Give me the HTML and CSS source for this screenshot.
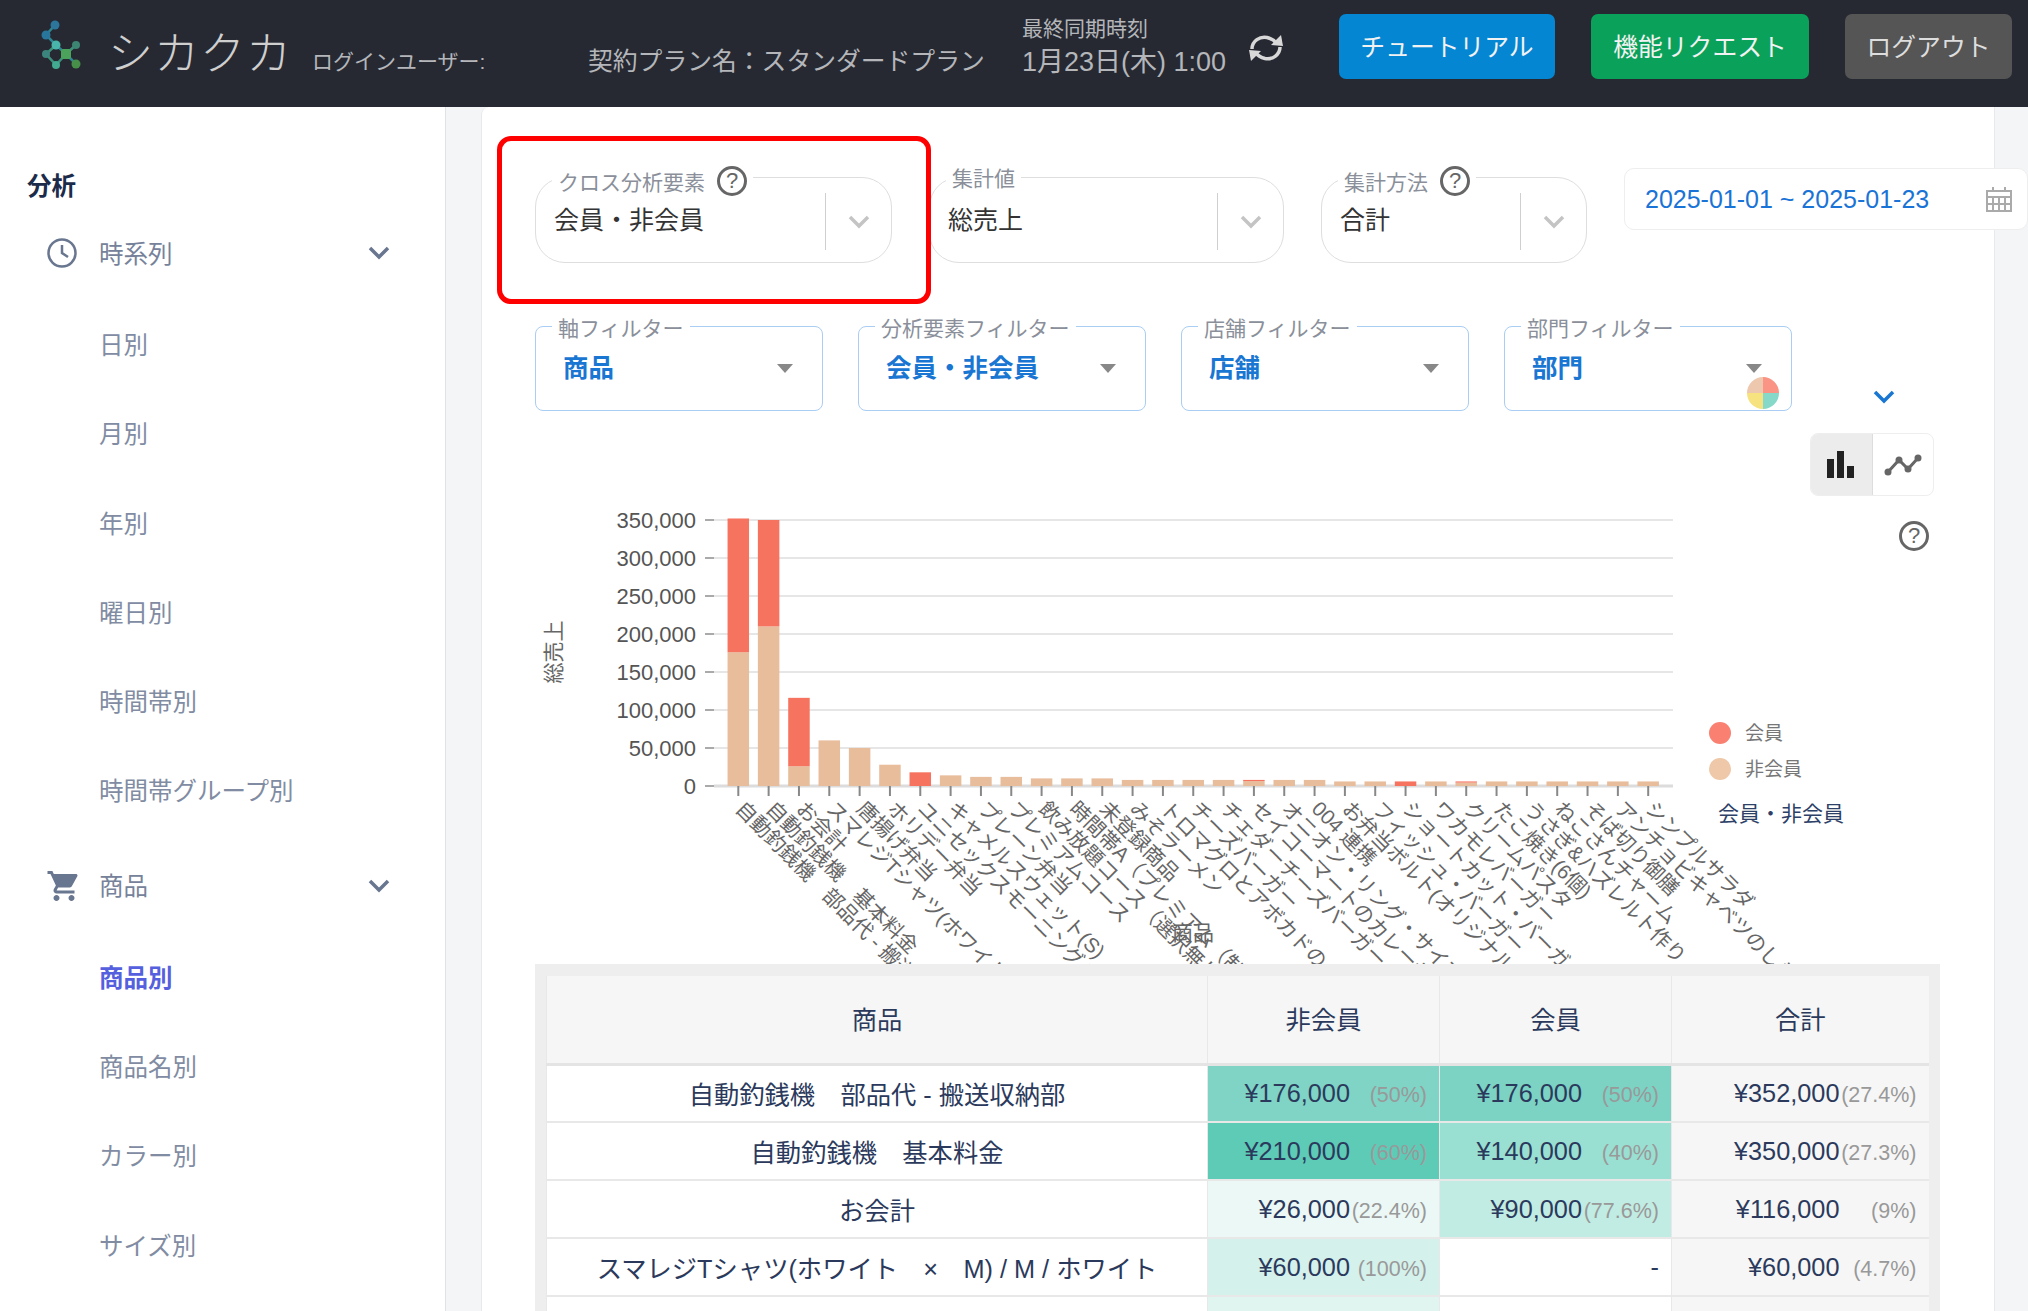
FILE: index.html
```html
<!DOCTYPE html>
<html lang="ja">
<head>
    <meta charset="UTF-8">
    <title>シカクカ</title>
    <link rel="stylesheet" href="styles.css">
</head>
<body>
<header class="topbar">
    <svg class="logo" viewBox="40 15 50 55" width="50" height="55">
        <g class="logo-links">
            <path d="M57 25L48 35L58 45L68 54L78 64" stroke="#2f8f9c"/>
            <path d="M78 45L68 54L58 65L48 54L58 45" stroke="#3f9c84"/>
        </g>
        <circle cx="57" cy="25" r="4.5" fill="#2d7fa8"/>
        <circle cx="48" cy="35" r="4.5" fill="#2a7fa8"/>
        <circle cx="58" cy="45" r="4.5" fill="#4cc4b8"/>
        <circle cx="78" cy="45" r="4" fill="#3f8f7a"/>
        <circle cx="48" cy="54" r="4" fill="#3f8f88"/>
        <rect x="63" y="49" width="10" height="10" rx="2" fill="#4fb060"/>
        <circle cx="58" cy="65" r="4" fill="#44b89c"/>
        <circle cx="78" cy="64" r="4.5" fill="#4a9c4c"/>
    </svg>
    <div class="brand">シカクカ</div>
    <div class="login-user">ログインユーザー:</div>
    <div class="plan">契約プラン名：スタンダードプラン</div>
    <div class="sync">
        <div class="sync-label">最終同期時刻</div>
        <div class="sync-time">1月23日(木) 1:00</div>
    </div>
    <svg class="sync-icon" viewBox="0 0 38 30" width="38" height="30">
        <path d="M5 16C5 8 13 3 20 4.5C24 5.500 27 7 29 10" class="sync-stroke"/>
        <path d="M33 14C33 22 25 27 18 25.500C14 24.500 11 23 9 20" class="sync-stroke"/>
        <path d="M24 12L36 13L34 2Z" fill="#d8d8d8"/>
        <path d="M14 18L2 17L4 28Z" fill="#d8d8d8"/>
    </svg>
    <div class="top-buttons">
        <button class="top-btn btn-tutorial">チュートリアル</button>
        <button class="top-btn btn-request">機能リクエスト</button>
        <button class="top-btn btn-logout">ログアウト</button>
    </div>
</header>

<div class="layout">
    <nav class="sidebar">
        <div class="nav-title">分析</div>
        <div class="nav-group">
            <svg class="nav-icon" viewBox="0 0 32 32" width="32" height="32">
                <circle cx="16" cy="16" r="13.500" class="clock-line"/>
                <path d="M16 8V16L22 20" class="clock-line"/>
            </svg>
            <span class="nav-group-name">時系列</span>
            <svg class="nav-chevron" viewBox="0 0 22 14" width="22" height="14"><path d="M2 2L11 11L20 2"/></svg>
        </div>
        <a class="nav-item">日別</a>
        <a class="nav-item">月別</a>
        <a class="nav-item">年別</a>
        <a class="nav-item">曜日別</a>
        <a class="nav-item">時間帯別</a>
        <a class="nav-item">時間帯グループ別</a>
        <div class="nav-group nav-group-second">
            <svg class="nav-icon" viewBox="0 0 24 24" width="36" height="36">
                <path fill="#69768f" d="M7 18c-1.100 0-1.990.9-1.990 2S5.900 22 7 22s2-.9 2-2-.9-2-2-2zM1 2v2h2l3.600 7.590-1.350 2.450c-.16.28-.25.61-.25.96 0 1.100.9 2 2 2h12v-2H7.420c-.14 0-.25-.11-.25-.25l.03-.12.9-1.630h7.450c.75 0 1.410-.41 1.750-1.030l3.580-6.490c.08-.14.12-.31.12-.48 0-.55-.45-1-1-1H5.210l-.94-2H1zm16 16c-1.100 0-1.990.9-1.990 2s.89 2 1.990 2 2-.9 2-2-.9-2-2-2z"/>
            </svg>
            <span class="nav-group-name">商品</span>
            <svg class="nav-chevron" viewBox="0 0 22 14" width="22" height="14"><path d="M2 2L11 11L20 2"/></svg>
        </div>
        <a class="nav-item active">商品別</a>
        <a class="nav-item">商品名別</a>
        <a class="nav-item">カラー別</a>
        <a class="nav-item">サイズ別</a>
    </nav>

    <main class="content">
        <div class="controls">
            <div class="highlight"></div>
            <div class="select select-cross">
                <div class="select-label">クロス分析要素<span class="help help-small">?</span></div>
                <div class="select-value">会員・非会員</div>
                <div class="select-arrow"><svg viewBox="0 0 22 14" width="22" height="14"><path d="M2 2L11 11L20 2"/></svg></div>
            </div>
            <div class="select select-value-kind">
                <div class="select-label">集計値</div>
                <div class="select-value">総売上</div>
                <div class="select-arrow"><svg viewBox="0 0 22 14" width="22" height="14"><path d="M2 2L11 11L20 2"/></svg></div>
            </div>
            <div class="select select-method">
                <div class="select-label">集計方法<span class="help help-small">?</span></div>
                <div class="select-value">合計</div>
                <div class="select-arrow"><svg viewBox="0 0 22 14" width="22" height="14"><path d="M2 2L11 11L20 2"/></svg></div>
            </div>
            <div class="date-range">
                <span>2025-01-01 ~ 2025-01-23</span>
                <svg viewBox="0 0 26 26" width="26" height="26" class="calendar">
                    <path d="M1 5H25V25H1ZM1 11H25M1 18H25M7 11V25M13 11V25M19 11V25M7 1V5M19 1V5"/>
                </svg>
            </div>
        </div>

        <div class="filters">
            <div class="filter">
                <div class="filter-label">軸フィルター</div>
                <div class="filter-value">商品</div>
                <div class="triangle"></div>
            </div>
            <div class="filter">
                <div class="filter-label">分析要素フィルター</div>
                <div class="filter-value">会員・非会員</div>
                <div class="triangle"></div>
            </div>
            <div class="filter">
                <div class="filter-label">店舗フィルター</div>
                <div class="filter-value">店舗</div>
                <div class="triangle"></div>
            </div>
            <div class="filter">
                <div class="filter-label">部門フィルター</div>
                <div class="filter-value">部門</div>
                <div class="triangle"></div>
                <svg class="pie" viewBox="0 0 32 32" width="32" height="32">
                    <path d="M16 16V0A16 16 0 0 0 0 16Z" fill="#eec8ae"/>
                    <path d="M16 16V0A16 16 0 0 1 32 16Z" fill="#fa9484"/>
                    <path d="M16 16H0A16 16 0 0 0 16 32Z" fill="#f6e27e"/>
                    <path d="M16 16H32A16 16 0 0 1 16 32Z" fill="#86d9c8"/>
                </svg>
            </div>
            <svg class="more" viewBox="0 0 22 14" width="22" height="14"><path d="M2 2L11 11L20 2"/></svg>
        </div>

        <div class="chart-area">
            <svg id="chart" class="chart" viewBox="535 420 1405 544" width="1405" height="544"></svg>
            <div class="chart-toggle">
                <div class="toggle-btn toggle-active">
                    <svg viewBox="0 0 28 27" width="28" height="27">
                        <path d="M0 8H7V27H0ZM10 0H17V27H10ZM20 15H27V27H20Z" fill="#222"/>
                    </svg>
                </div>
                <div class="toggle-btn">
                    <svg viewBox="0 0 38 24" width="38" height="24">
                        <path d="M4 19L15 7L24 16L34 5" fill="none" stroke="#666" stroke-width="3"/>
                        <circle cx="4" cy="19" r="3.500" fill="#666"/>
                        <circle cx="15" cy="7" r="3.500" fill="#666"/>
                        <circle cx="24" cy="16" r="3.500" fill="#666"/>
                        <circle cx="34" cy="5" r="3.500" fill="#666"/>
                    </svg>
                </div>
            </div>
            <span class="help help-chart">?</span>
        </div>

        <div class="table-wrap">
            <table class="cross-table">
                <colgroup>
                    <col class="col-name"><col class="col-a"><col class="col-b"><col class="col-total">
                </colgroup>
                <thead>
                    <tr><th>商品</th><th>非会員</th><th>会員</th><th>合計</th></tr>
                </thead>
                <tbody>
                    <tr>
                        <td class="name">自動釣銭機　部品代 - 搬送収納部</td>
                        <td class="num heat-50">¥176,000<span class="pct">(50%)</span></td>
                        <td class="num heat-50b">¥176,000<span class="pct">(50%)</span></td>
                        <td class="num total">¥352,000<span class="pct">(27.4%)</span></td>
                    </tr>
                    <tr>
                        <td class="name">自動釣銭機　基本料金</td>
                        <td class="num heat-60">¥210,000<span class="pct">(60%)</span></td>
                        <td class="num heat-40">¥140,000<span class="pct">(40%)</span></td>
                        <td class="num total">¥350,000<span class="pct">(27.3%)</span></td>
                    </tr>
                    <tr>
                        <td class="name">お会計</td>
                        <td class="num heat-22">¥26,000<span class="pct">(22.4%)</span></td>
                        <td class="num heat-77">¥90,000<span class="pct">(77.6%)</span></td>
                        <td class="num total">¥116,000<span class="pct">(9%)</span></td>
                    </tr>
                    <tr>
                        <td class="name">スマレジTシャツ(ホワイト　×　M) / M / ホワイト</td>
                        <td class="num heat-100">¥60,000<span class="pct">(100%)</span></td>
                        <td class="num">-</td>
                        <td class="num total">¥60,000<span class="pct">(4.7%)</span></td>
                    </tr>
                    <tr>
                        <td class="name">唐揚げ弁当</td>
                        <td class="num heat-last">¥50,000<span class="pct">(100%)</span></td>
                        <td class="num">-</td>
                        <td class="num total">¥50,000<span class="pct">(3.9%)</span></td>
                    </tr>
                </tbody>
            </table>
        </div>
    </main>
</div>
<script src="chart.js"></script>
</body>
</html>
```

FILE: styles.css
```css
* {
    box-sizing: border-box;
}

html, body {
    height: 100%;
}

body {
    margin: 0;
    overflow: hidden;
    background-color: #f4f5f7;
    font-family: "Liberation Sans", "Noto Sans CJK JP", sans-serif;
    font-size: 24px;
    color: #333;
}

/* Header */
.topbar {
    display: flex;
    align-items: flex-start;
    height: 107px;
    background-color: #262932;
    color: #c6c8cc;
}
.logo {
    margin: 15px 0 0 38px;
    opacity: 0.9;
}
.logo-links path {
    fill: none;
    stroke-width: 2.500;
}
.brand {
    margin: 25px 0 0 20px;
    width: 204px;
    font-size: 45px;
    line-height: 60px;
    letter-spacing: 1px;
    font-weight: 300;
    color: #cfcfcf;
}
.login-user {
    width: 276px;
    margin-top: 48px;
    font-size: 21px;
    line-height: 28px;
    color: #b4b6ba;
    white-space: nowrap;
}
.plan {
    width: 434px;
    margin-top: 44px;
    font-size: 24.800px;
    line-height: 36px;
    color: #b4b6ba;
    white-space: nowrap;
}
.sync {
    width: 225px;
    margin-top: 14px;
    color: #b4b6ba;
}
.sync-label {
    font-size: 21px;
    line-height: 30px;
}
.sync-time {
    font-size: 27px;
    line-height: 36px;
}
.sync-icon {
    margin-top: 33px;
}
.sync-stroke {
    fill: none;
    stroke: #d8d8d8;
    stroke-width: 3.500;
}
.top-buttons {
    display: flex;
    gap: 36px;
    margin: 14px 16px 0 auto;
}
.top-btn {
    height: 65px;
    padding: 0 0 4px;
    border: none;
    border-radius: 7px;
    font-family: inherit;
    font-size: 24.800px;
    color: #f2f2f2;
}
.btn-tutorial {
    width: 216px;
    background-color: #0486d2;
}
.btn-request {
    width: 218px;
    background-color: #0aa15a;
}
.btn-logout {
    width: 167px;
    background-color: #555;
    color: #ddd;
}

/* Sidebar */
.layout {
    display: flex;
    height: 1204px;
}
.sidebar {
    flex: none;
    width: 446px;
    padding-top: 60px;
    background-color: #fff;
    border-right: 1px solid #e0e2e6;
    font-size: 24.500px;
}
.nav-title {
    height: 40px;
    padding-left: 27px;
    font-weight: 700;
    line-height: 40px;
    color: #1c2b4a;
}
.nav-group {
    display: flex;
    align-items: center;
    position: relative;
    height: 92px;
    margin-bottom: 2px;
    padding-left: 99px;
    color: #76829a;
}
.nav-group-name {
    margin-bottom: 2px;
}
.nav-group-second {
    margin-top: 3px;
}
.nav-icon {
    position: absolute;
    left: 46px;
}
.clock-line {
    fill: none;
    stroke: #69768f;
    stroke-width: 2.500;
}
.nav-chevron {
    position: absolute;
    left: 368px;
    fill: none;
    stroke: #69768f;
    stroke-width: 3.500;
}
.nav-item {
    display: block;
    height: 89.300px;
    padding-left: 99px;
    line-height: 89.300px;
    color: #818ca3;
}
.nav-item.active {
    font-weight: 700;
    color: #5560de;
}

/* Main */
.content {
    flex: none;
    width: 1514px;
    margin-left: 35px;
    padding-left: 53px;
    background-color: #fff;
    border-left: 1px solid #e8e9ec;
    border-right: 1px solid #e8e9ec;
    border-top-left-radius: 8px;
}
.controls {
    display: flex;
    align-items: flex-start;
    position: relative;
    height: 219px;
    padding-top: 61px;
}
.highlight {
    position: absolute;
    z-index: 1;
    left: -38px;
    top: 29px;
    width: 434px;
    height: 168px;
    border: 5px solid #f00;
    border-radius: 14px;
    pointer-events: none;
}
.select {
    display: flex;
    flex: none;
    position: relative;
    height: 86px;
    margin-top: 9px;
    padding-top: 14px;
    border: 1.500px solid #dedede;
    border-radius: 30px;
    font-size: 25px;
}
.select-cross {
    width: 357px;
}
.select-value-kind {
    width: 355px;
    margin-left: 37px;
}
.select-value-kind .select-label {
    top: -17px;
}
.select-method {
    width: 266px;
    margin-left: 37px;
}
.select-label {
    display: flex;
    align-items: center;
    position: absolute;
    left: 16px;
    top: -13px;
    height: 32px;
    padding: 0 6px;
    background-color: #fff;
    font-size: 21px;
    color: #8a8f9a;
}
.select-value {
    flex: 1;
    height: 57px;
    padding-left: 18px;
    line-height: 57px;
    color: #333;
}
.select-arrow {
    display: flex;
    align-items: center;
    justify-content: center;
    width: 66px;
    height: 57px;
    margin-top: 1px;
    border-left: 1.500px solid #cfcfcf;
}
.select-arrow svg {
    fill: none;
    stroke: #c4c4c4;
    stroke-width: 3.500;
}
.help {
    display: inline-flex;
    align-items: center;
    justify-content: center;
    width: 30px;
    height: 30px;
    border: 3px solid #666;
    border-radius: 50%;
    font-size: 22px;
    color: #666;
}
.help-small {
    margin-left: 12px;
}
.date-range {
    display: flex;
    flex: none;
    align-items: center;
    width: 404px;
    height: 62px;
    margin-left: 37px;
    padding-left: 20px;
    border: 1.500px solid #eee;
    border-radius: 10px;
    background-color: #fff;
    font-size: 25px;
    color: #1a73d6;
}
.calendar {
    margin-left: 57px;
    fill: none;
    stroke: #aaa;
    stroke-width: 2;
}

/* Filters */
.filters {
    display: flex;
    gap: 35px;
    height: 85px;
}
.filter {
    position: relative;
    width: 288px;
    height: 85px;
    border: 1.500px solid #a9cdf3;
    border-radius: 8px;
}
.filter-label {
    position: absolute;
    left: 16px;
    top: -12px;
    padding: 0 6px;
    background-color: #fff;
    font-size: 21px;
    line-height: 28px;
    color: #8a8f9a;
}
.filter-value {
    padding: 23px 0 0 27px;
    font-size: 25.500px;
    font-weight: 700;
    line-height: 36px;
    color: #1976d2;
}
.triangle {
    position: absolute;
    right: 29px;
    top: 37px;
    width: 0;
    height: 0;
    border-left: 8px solid transparent;
    border-right: 8px solid transparent;
    border-top: 9px solid #888;
}
.pie {
    position: absolute;
    right: 12px;
    bottom: 1px;
}
.more {
    align-self: flex-end;
    margin: 0 0 7px 46px;
    fill: none;
    stroke: #1976d2;
    stroke-width: 3.500;
}

/* Chart */
.chart-area {
    position: relative;
    height: 553px;
}
.chart {
    display: block;
    position: absolute;
    left: 0;
    top: 9px;
}
.chart-toggle {
    display: flex;
    position: absolute;
    left: 1275px;
    top: 22px;
    width: 124px;
    height: 63px;
    border: 1.500px solid #eee;
    border-radius: 8px;
    overflow: hidden;
}
.toggle-btn {
    display: flex;
    flex: 1;
    align-items: center;
    justify-content: center;
}
.toggle-active {
    background-color: #ececec;
    border-right: 1.500px solid #ddd;
}
.help-chart {
    position: absolute;
    left: 1364px;
    top: 110px;
}

/* Table */
.table-wrap {
    width: 1405px;
    padding: 12px 11px 0;
    background-color: #eee;
}
.cross-table {
    width: 1382px;
    border-collapse: collapse;
    table-layout: fixed;
    background-color: #fff;
    font-size: 25.300px;
    color: #2b3a5c;
}
.col-name { width: 661px; }
.col-a { width: 232px; }
.col-b { width: 232px; }
.col-total { width: 257px; }
.cross-table th {
    height: 88px;
    padding-bottom: 4px;
    background-color: #f6f6f6;
    border-left: 1px solid #e8e8e8;
    border-bottom: 3px solid #e4e4e4;
    font-weight: 400;
}
.cross-table td {
    height: 58px;
    padding: 0 12px;
    border-left: 1px solid #e8e8e8;
    border-bottom: 2px solid #e8e8e8;
    white-space: nowrap;
}
.name {
    text-align: center;
}
.num {
    text-align: right;
}
.pct {
    display: inline-block;
    min-width: 77px;
    font-size: 21.500px;
    text-align: right;
    color: #999;
}
.total { background-color: #f6f6f6; }
.heat-60 { background-color: #5ecbb7; }
.heat-50 { background-color: #7fd4c5; }
.heat-50b { background-color: #7cd3c4; }
.heat-40 { background-color: #9ae0d2; }
.heat-77 { background-color: #c1ece3; }
.heat-100 { background-color: #d5f1ec; }
.heat-22 { background-color: #ecf8f5; }
.heat-last { background-color: #e0f5ef; }

/* svg chart text */
.axis-value {
    font-size: 22px;
    fill: #555;
    text-anchor: end;
}
.cat-label {
    font-size: 20.500px;
    fill: #666;
}
.axis-title {
    font-size: 21px;
    fill: #666;
    text-anchor: middle;
}
.legend-text {
    font-size: 19px;
    fill: #777;
}
.legend-title {
    font-size: 21px;
    fill: #2c4068;
}
```

FILE: chart.js
```js
// stacked bars, coordinates are in page pixels (see viewBox on #chart)
const svg = document.getElementById('chart');
const NS = 'http://www.w3.org/2000/svg';

const labels = [
    '自動釣銭機　部品代 - 搬送…', '自動釣銭機　基本料金', 'お会計', 'スマレジTシャツ(ホワイト',
    '唐揚げ弁当', 'ホリデー弁当', 'ユニセックスモーニングパック(サ', 'キャメルスウェット(S)',
    'プレーン弁当', 'プレミアムコース', '飲み放題コース（選択無し', '時間帯A（プレミアム（制限',
    '未登録商品', 'みそラーメン', 'トロマグロとアボカドのタル', 'チーズバーガー',
    'チェダーチーズバーガー', 'セイコーマートのカレーせ…', 'オニオン・リング・サイズ:…', '004 連携',
    'お弁当ボルト(オリジナル・…', 'フィッシュ・バーガー', 'ショートカット・バーガー', 'ワカモレバーガー',
    'クリームパスタ', 'たこ焼き(6個)', 'うさぎ&ハズレルト作り', 'ねこさんチャーム',
    'そば切り御膳', 'アンチョビキャベツのしらす', 'シンプルサラダ'
];
const nonMember = [176000, 210000, 26000, 60000, 50000, 28000, 0, 14000, 12000, 12000, 10000, 10000, 10000,
    8000, 8000, 8000, 8000, 6500, 8000, 8000, 6000, 6000, 0, 6000, 4500, 6000, 6000, 6000, 6000, 6000, 6000];
const member = [176000, 140000, 90000, 0, 0, 0, 18000, 0, 0, 0, 0, 0, 0,
    0, 0, 0, 0, 1500, 0, 0, 0, 0, 6000, 0, 1500, 0, 0, 0, 0, 0, 0];

const Y0 = 786;
const PX_PER_YEN = 266 / 350000;
const FIRST_TICK = 738.3;
const STEP = 30.33;
const BAR_W = 21.5;

function add(tag, attrs, text) {
    const el = document.createElementNS(NS, tag);
    for (const [k, v] of Object.entries(attrs)) {
        el.setAttribute(k, v);
    }
    if (text) {
        el.textContent = text;
    }
    svg.appendChild(el);
    return el;
}

// grid and y labels
for (let v = 0; v <= 350000; v += 50000) {
    const y = Y0 - v * PX_PER_YEN;
    add('line', { x1: 714, x2: 1673, y1: y, y2: y, stroke: v === 0 ? '#dcdcdc' : '#e6e6e6', 'stroke-width': v === 0 ? 3 : 2 });
    add('line', { x1: 705, x2: 714, y1: y, y2: y, stroke: '#aaa', 'stroke-width': 2 });
    add('text', { x: 696, y: y + 8, class: 'axis-value' }, v.toLocaleString('en-US'));
}

labels.forEach((label, i) => {
    const x = FIRST_TICK + i * STEP;
    const h1 = nonMember[i] * PX_PER_YEN;
    const h2 = member[i] * PX_PER_YEN;
    add('line', { x1: x, x2: x, y1: Y0, y2: Y0 + 10, stroke: '#888', 'stroke-width': 2 });
    if (h1) {
        add('rect', { x: x - BAR_W / 2, y: Y0 - h1, width: BAR_W, height: h1, fill: '#e8bd9c' });
    }
    if (h2) {
        add('rect', { x: x - BAR_W / 2, y: Y0 - h1 - h2, width: BAR_W, height: h2, fill: '#f6735f' });
    }
    add('text', { class: 'cat-label', transform: `translate(${x - 4} 810) rotate(45)` }, label);
});

add('text', { class: 'axis-title', transform: 'translate(561 652) rotate(-90)' }, '総売上');
add('text', { class: 'axis-title', x: 1193, y: 940 }, '商品');

add('circle', { cx: 1720, cy: 733, r: 11, fill: '#fa8072' });
add('text', { class: 'legend-text', x: 1745, y: 740 }, '会員');
add('circle', { cx: 1720, cy: 769, r: 11, fill: '#eec8a8' });
add('text', { class: 'legend-text', x: 1745, y: 776 }, '非会員');
add('text', { class: 'legend-title', x: 1718, y: 821 }, '会員・非会員');
```
